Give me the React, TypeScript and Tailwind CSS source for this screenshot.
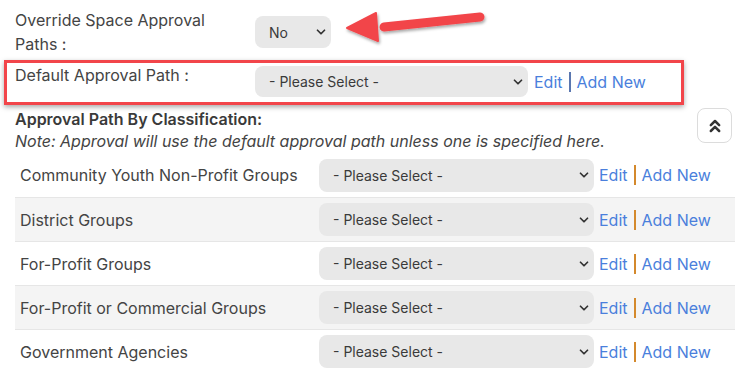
import React from "react";
import { ChevronDown, ChevronsUp } from "lucide-react";

const CLASSIFICATIONS = [
  "Community Youth Non-Profit Groups",
  "District Groups",
  "For-Profit Groups",
  "For-Profit or Commercial Groups",
  "Government Agencies",
];

function FakeSelect({ value, className }: { value: string; className: string }) {
  return (
    <div className={`relative flex items-center rounded-lg bg-[#e8e8e8] text-[14px] text-[#3a3a3a] ${className}`}>
      <span className="pl-[14px]">{value}</span>
      <ChevronDown size={14} strokeWidth={3} className="absolute right-[3px] text-[#333]" />
    </div>
  );
}

function Links({ sep }: { sep: string }) {
  return (
    <div className="flex items-center text-[16px] text-[#4a7fdc]">
      <span>Edit</span>
      <span className={`mx-[6px] h-[20px] w-[2px] ${sep}`} />
      <span>Add New</span>
    </div>
  );
}

export default function App() {
  return (
    <div
      className="relative h-[370px] w-[752px] overflow-hidden bg-white text-[#444]"
      style={{ fontFamily: "Inter, 'Noto Sans', sans-serif" }}
    >
      {/* Override row */}
      <div className="flex pl-[15px] pt-[8px]">
        <div className="w-[240px] text-[16px] leading-[24px]">
          Override Space Approval
          <br />
          Paths :
        </div>
        <FakeSelect value="No" className="mt-[8px] h-[32px] w-[76px]" />
      </div>

      {/* Default approval path (highlighted) */}
      <div className="ml-[4px] mt-[4px] flex h-[45px] w-[680px] items-start border-[3px] border-[#f2454a] shadow-[0_2px_5px_rgba(0,0,0,0.35)]">
        <div className="w-[248px] pl-[8px] text-[16px] leading-[24px]">Default Approval Path :</div>
        <FakeSelect value="- Please Select -" className="mt-[3px] h-[31px] w-[273px]" />
        <div className="ml-[6px] mt-[7px]">
          <Links sep="bg-[#5a77b0]" />
        </div>
      </div>

      {/* Classification header */}
      <div className="flex items-start pl-[15px] pr-[20px] pt-[3px]">
        <div className="flex-1">
          <div className="text-[16px] font-semibold leading-[22px] text-[#3a3a3a]">Approval Path By Classification:</div>
          <div className="text-[16px] italic leading-[23px]">
            Note: Approval will use the default approval path unless one is specified here.
          </div>
        </div>
        <button className="flex h-[35px] w-[35px] items-center justify-center rounded-lg border border-[#dcdcdc] bg-white">
          <ChevronsUp size={20} strokeWidth={3} className="text-[#333]" />
        </button>
      </div>

      {/* Rows */}
      <div className="ml-[15px] w-[720px]">
        {CLASSIFICATIONS.map((name, i) => (
          <div
            key={name}
            className={`flex h-[44px] items-center border-t border-[#e6e6e6] ${i % 2 === 1 ? "bg-[#f4f4f4]" : "bg-white"} ${i === 0 ? "border-t-0" : ""}`}
          >
            <div className="w-[304px] pl-[5px] text-[16px]">{name}</div>
            <FakeSelect value="- Please Select -" className="h-[33px] w-[275px]" />
            <div className="ml-[5px]">
              <Links sep="bg-[#d4892c]" />
            </div>
          </div>
        ))}
      </div>

      {/* Annotation arrow */}
      <svg className="absolute left-[340px] top-[4px]" width="150" height="50" viewBox="0 0 150 50">
        <defs>
          <filter id="sh" x="-20%" y="-40%" width="140%" height="180%">
            <feDropShadow dx="1" dy="2" stdDeviation="1.5" floodColor="#000" floodOpacity="0.35" />
          </filter>
        </defs>
        <g filter="url(#sh)" fill="#f2454a" stroke="#f2454a" strokeLinejoin="round">
          <path d="M44 23 L140 13" strokeWidth="9" strokeLinecap="round" fill="none" />
          <path d="M7 24 L36 9 L38 37 Z" strokeWidth="2" />
        </g>
      </svg>
    </div>
  );
}
